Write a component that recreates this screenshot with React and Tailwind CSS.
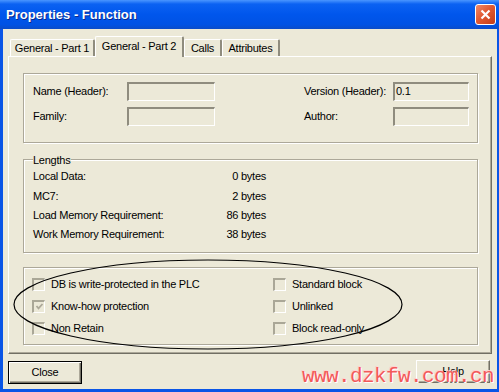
import React from "react";

const Field = ({ value, w }) => (
  <div
    className={`${w} h-[19px] border-t-2 border-l-2 border-r border-b border-t-[#8f8c7e] border-l-[#8f8c7e] border-r-white border-b-white bg-[#ece9d8] pl-[1px] leading-[15px]`}
  >
    {value}
  </div>
);

const Check = ({ label, checked }) => (
  <div className="h-[22px] flex items-center gap-[6px]">
    <div className="w-[13px] h-[13px] border-t-2 border-l-2 border-r border-b border-t-[#aaa797] border-l-[#aaa797] border-r-white border-b-white bg-[#ece9d8] flex items-center justify-center">
      {checked && (
        <svg width="9" height="9" viewBox="0 0 9 9">
          <path d="M1.5 4 L3.5 6.3 L7.5 2" fill="none" stroke="#aca899" strokeWidth="1.8" />
        </svg>
      )}
    </div>
    <span>{label}</span>
  </div>
);

const Tab = ({ label, w, active }) =>
  active ? (
    <div
      className={`${w} h-[21px] -mb-[1px] relative bg-[#ece9d8] border-t border-l border-white border-r-2 border-r-[#8f8c7e] rounded-t-[2px] flex items-center justify-center pb-[2px]`}
    >
      {label}
    </div>
  ) : (
    <div
      className={`${w} h-[17px] border-t border-l border-white border-r-2 border-r-[#8f8c7e] rounded-t-[2px] flex items-center justify-center`}
    >
      {label}
    </div>
  );

const etched = "border border-[#aca899] shadow-[inset_1px_1px_0_#fff,1px_1px_0_#fff]";

export default function App() {
  const lengths = [
    ["Local Data:", "0 bytes", "h-[19px]"],
    ["MC7:", "2 bytes", "h-[20px]"],
    ["Load Memory Requirement:", "86 bytes", "h-[19px]"],
    ["Work Memory Requirement:", "38 bytes", "h-[18px]"],
  ];

  return (
    <div className="relative w-[499px] h-[392px] bg-[#0a55e6] flex flex-col text-black text-[11px] tracking-[-0.25px] font-['Liberation_Sans',Arial,sans-serif]">
      {/* title bar */}
      <div className="h-[29px] flex items-center justify-between pl-[6px] pr-[3px] bg-[linear-gradient(180deg,#4a96ff_0%,#0b62f2_14%,#0056ec_50%,#0052e4_85%,#0b4cc8_100%)]">
        <span className="text-white font-bold text-[13px] tracking-normal [text-shadow:1px_1px_0_#0b2a8c]">
          Properties - Function
        </span>
        <div className="w-[21px] h-[21px] rounded-[3px] border border-white bg-[linear-gradient(135deg,#f08a6a_0%,#e15a33_45%,#c23c18_100%)] flex items-center justify-center">
          <svg width="11" height="11" viewBox="0 0 11 11">
            <path d="M1.5 1.5 L9.5 9.5 M9.5 1.5 L1.5 9.5" stroke="#fff" strokeWidth="2.2" />
          </svg>
        </div>
      </div>

      {/* client area */}
      <div className="flex-1 ml-[3px] mr-[2px] mb-[3px] bg-[#ece9d8] px-[5px] pt-[7px] flex flex-col">
        <div className="h-[20px] flex items-end pl-[2px]">
          <Tab label="General - Part 1" w="w-[85px]" />
          <Tab label="General - Part 2" w="w-[89px]" active />
          <Tab label="Calls" w="w-[38px]" />
          <Tab label="Attributes" w="w-[58px]" />
        </div>

        <div className="h-[298px] border-t border-l border-white border-r border-b border-r-[#716f64] border-b-[#716f64] shadow-[inset_-1px_-1px_0_#aca899] pl-[14px] pr-[13px] pt-[16px] flex flex-col">
          {/* header group */}
          <div className={`h-[70px] ${etched} pt-[8px] pl-[9px] pr-[8px] flex justify-between`}>
            <div className="flex flex-col gap-[6px]">
              <div className="flex items-center">
                <span className="w-[94px]">Name (Header):</span>
                <Field w="w-[88px]" />
              </div>
              <div className="flex items-center">
                <span className="w-[94px]">Family:</span>
                <Field w="w-[88px]" />
              </div>
            </div>
            <div className="flex flex-col gap-[6px]">
              <div className="flex items-center">
                <span className="w-[89px]">Version (Header):</span>
                <Field w="w-[76px]" value="0.1" />
              </div>
              <div className="flex items-center">
                <span className="w-[89px]">Author:</span>
                <Field w="w-[76px]" />
              </div>
            </div>
          </div>

          {/* lengths group */}
          <div className={`mt-[16px] h-[94px] ${etched} pl-[9px]`}>
            <span className="block w-fit -mt-[7px] h-[14px] leading-[14px] bg-[#ece9d8] pr-[1px]">Lengths</span>
            {lengths.map(([label, value, h]) => (
              <div key={label} className={`${h} flex items-center`}>
                <span className="w-[175px]">{label}</span>
                <span className="w-[58px] text-right">{value}</span>
              </div>
            ))}
          </div>

          {/* attributes group */}
          <div className={`mt-[14px] h-[78px] ${etched} pt-[5px] pl-[8px] flex`}>
            <div className="w-[241px] flex flex-col">
              <Check label="DB is write-protected in the PLC" />
              <Check label="Know-how protection" checked />
              <Check label="Non Retain" />
            </div>
            <div className="flex flex-col">
              <Check label="Standard block" />
              <Check label="Unlinked" />
              <Check label="Block read-only" />
            </div>
          </div>
        </div>

        <div className="mt-[6px] flex justify-between items-start">
          <button className="w-[74px] h-[23px] border border-black bg-[#ece9d8] shadow-[inset_1px_1px_0_#fff,inset_-1px_-1px_0_#716f64,inset_-2px_-2px_0_#aca899] text-[11px] tracking-[-0.25px] mt-[1px]">
            Close
          </button>
          <button className="w-[74px] h-[23px] mr-[2px] border-t border-l border-white border-r border-b border-r-[#716f64] border-b-[#716f64] bg-[#ece9d8] shadow-[inset_-1px_-1px_0_#aca899] text-[11px] tracking-[-0.25px]">
            Help
          </button>
        </div>
      </div>

      {/* hand-drawn ellipse annotation */}
      <svg className="absolute left-0 top-0 pointer-events-none" width="499" height="392">
        <ellipse cx="208" cy="304.5" rx="194" ry="44.5" fill="none" stroke="#000" strokeWidth="1.2" />
      </svg>

      {/* watermark */}
      <span className="absolute left-[302px] top-[364px] leading-[26px] text-[21px] tracking-[-0.6px] text-[#f25a5a] font-['Liberation_Mono',monospace] [text-shadow:1px_1px_0_#fff,-1px_-1px_0_#ffd0d0] pointer-events-none">
        www.dzkfw.com.cn
      </span>
    </div>
  );
}
